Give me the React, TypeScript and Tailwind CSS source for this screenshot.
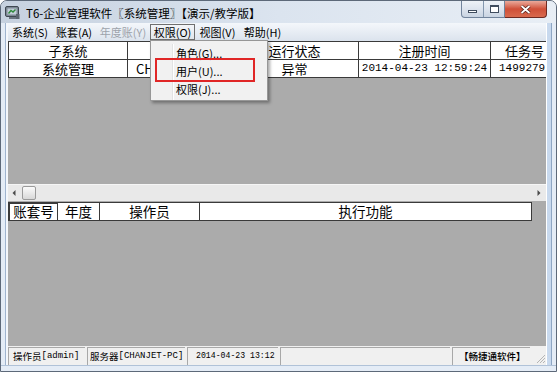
const CJK = "font-['Noto_Sans_CJK_SC',sans-serif]";
const MONO = "font-['Liberation_Mono',monospace]";

function AppIcon() {
  return (
    <svg width="15" height="15" viewBox="0 0 15 15">
      <rect x="0.5" y="1.5" width="13" height="10" rx="1.5" fill="#7d8894" stroke="#3f4852" />
      <rect x="2.5" y="3.5" width="9" height="6" fill="#c3ced9" />
      <path d="M3.5 8.5 L6 5.5 L8 7 L10.5 4.5" stroke="#2f8a3c" strokeWidth="1.4" fill="none" />
      <rect x="4" y="12" width="7" height="2" fill="#6a7480" />
      <rect x="11" y="9" width="3.5" height="5" fill="#5b6570" />
    </svg>
  );
}

function TitleBar() {
  return (
    <div className="h-[22px] flex items-start bg-gradient-to-r from-[#c6d1df] via-[#dbe4ef] to-[#e8eef5]">
      <div className="ml-[4px] mt-[4px]">
        <AppIcon />
      </div>
      <div className={`ml-[6px] mt-[5px] text-[11.5px] leading-[14px] text-black whitespace-nowrap ${CJK}`}>
        T6-企业管理软件〖系统管理〗【演示/教学版】
      </div>
      <div className="flex-1" />
      <div className="flex mr-[9px]">
        <div className="flex h-[17px] border border-t-0 border-[#71839b] rounded-bl-[4px] overflow-hidden bg-gradient-to-b from-[#eef2f7] via-[#dde4ee] to-[#c9d4e2]">
          <div className="w-[22px] flex items-center justify-center border-r border-[#8497ae]">
            <div className="w-[9px] h-[3px] mt-[5px] border border-[#3f4c5e] bg-white" />
          </div>
          <div className="w-[20px] flex items-center justify-center">
            <div className="w-[9px] h-[8px] border border-t-2 border-[#3f4c5e] bg-white" />
          </div>
        </div>
        <div className="w-[42px] h-[17px] flex items-center justify-center border border-t-0 border-l-0 border-[#6e2a22] rounded-br-[4px] bg-gradient-to-b from-[#e9a99b] via-[#cf4f38] to-[#d96a4e]">
          <svg width="11" height="9" viewBox="0 0 11 9">
            <path d="M1.5 1 L9.5 8 M9.5 1 L1.5 8" stroke="#4a1a14" strokeWidth="3.2" />
            <path d="M1.5 1 L9.5 8 M9.5 1 L1.5 8" stroke="#ffffff" strokeWidth="1.8" />
          </svg>
        </div>
      </div>
    </div>
  );
}

const menus = [
  { label: "系统(S)", w: "w-[44px]" },
  { label: "账套(A)", w: "w-[44px]" },
  { label: "年度账(Y)", w: "w-[54px]", disabled: true },
  { label: "权限(O)", w: "w-[45px]", open: true },
  { label: "视图(V)", w: "w-[45px]" },
  { label: "帮助(H)", w: "w-[45px]" },
];

function MenuBar() {
  return (
    <div className={`h-[18px] flex items-center bg-gradient-to-b from-[#f4f7fb] to-[#dbe3ed] text-[11px] ${CJK}`}>
      {menus.map((m) => (
        <div
          key={m.label}
          className={`${m.w} h-[16px] flex items-center justify-center leading-none ${
            m.disabled ? "text-[#9da3ab]" : "text-black"
          } ${m.open ? "border border-[#6f6f6f] bg-gradient-to-b from-[#f3f5f8] to-[#e1e6ec]" : ""}`}
        >
          {m.label}
        </div>
      ))}
    </div>
  );
}

const topCols = [
  { w: "w-[120px]", head: "子系统", data: "系统管理" },
  { w: "w-[103px]", head: "站点", data: "CHANJET-PC", left: true },
  { w: "w-[128px]", head: "运行状态", data: "异常" },
  { w: "w-[132px]", head: "注册时间", data: "2014-04-23 12:59:24", mono: true },
  { w: "w-[68px]", head: "任务号", data: "1499279", mono: true, left: true },
];

function TopTable() {
  return (
    <div className="overflow-hidden">
      <div className={`flex border-t border-[#3a3a3a] text-[13px] leading-none ${CJK}`}>
        {topCols.map((c, i) => (
          <div
            key={c.head}
            className={`${c.w} shrink-0 h-[18px] flex items-center justify-center bg-white border-r border-b border-[#3a3a3a] ${
              i === 0 ? "border-l" : ""
            }`}
          >
            {c.head}
          </div>
        ))}
      </div>
      <div className="flex leading-none">
        {topCols.map((c, i) => (
          <div
            key={c.head}
            className={`${c.w} shrink-0 h-[18px] flex items-center bg-white border-r border-b border-[#3a3a3a] whitespace-nowrap overflow-hidden ${
              i === 0 ? "border-l" : ""
            } ${c.left ? "justify-start pl-[8px]" : "justify-center"} ${
              c.mono ? `${MONO} text-[11px]` : `${CJK} text-[13px]`
            }`}
          >
            {c.data}
          </div>
        ))}
      </div>
    </div>
  );
}

function ScrollBar() {
  return (
    <div className="h-[17px] flex items-center bg-[#e9e9e9] border-t border-[#f5f5f5]">
      <svg className="ml-[4px]" width="4" height="6" viewBox="0 0 4 6">
        <path d="M3.5 0 L0.5 3 L3.5 6Z" fill="#4a4a4a" />
      </svg>
      <div className="ml-[6px] w-[14px] h-[14px] rounded-[2px] border border-[#9a9a9a] bg-gradient-to-b from-[#fbfbfb] to-[#d8d8d8]" />
      <div className="flex-1" />
      <svg className="mr-[5px]" width="4" height="6" viewBox="0 0 4 6">
        <path d="M0.5 0 L3.5 3 L0.5 6Z" fill="#4a4a4a" />
      </svg>
    </div>
  );
}

const logCols = [
  { w: "w-[50px]", head: "账套号" },
  { w: "w-[42px]", head: "年度" },
  { w: "w-[100px]", head: "操作员" },
  { w: "w-[332px]", head: "执行功能" },
];

function LogHeader() {
  return (
    <div className={`mt-[1px] flex text-[13.5px] leading-none ${CJK}`}>
      {logCols.map((c, i) => (
        <div
          key={c.head}
          className={`${c.w} shrink-0 h-[19px] flex items-center justify-center bg-white border-t border-r border-b border-[#3a3a3a] ${
            i === 0 ? "border-l-2 border-t-2" : ""
          }`}
        >
          {c.head}
        </div>
      ))}
    </div>
  );
}

function StatusBar() {
  const cell =
    "h-full flex items-center whitespace-nowrap overflow-hidden border-l border-t border-[#a8a8a8] border-r-white border-b-white";
  return (
    <div className={`h-[19px] flex gap-[2px] bg-[#f0f0f0] pt-[1px] text-[9.5px] leading-none text-black ${CJK}`}>
      <div className={`${cell} w-[77px] pl-[4px]`}>
        操作员<span className={`${MONO} text-[9px]`}>[admin]</span>
      </div>
      <div className={`${cell} w-[98px] pl-[2px]`}>
        服务器<span className={`${MONO} text-[9px]`}>[CHANJET-PC]</span>
      </div>
      <div className={`${cell} w-[91px] pl-[8px] ${MONO} text-[8.2px]`}>2014-04-23 13:12</div>
      <div className={`${cell} flex-1`} />
      <div className={`${cell} w-[78px] pl-[6px] font-medium`}>【畅捷通软件】</div>
      <div className="w-[14px] h-full flex items-end justify-end pb-[1px]">
        <svg width="11" height="11" viewBox="0 0 11 11">
          <path d="M10 2 L2 10 M10 5 L5 10 M10 8 L8 10" stroke="#b5b5b5" strokeWidth="1" />
        </svg>
      </div>
    </div>
  );
}

function Dropdown() {
  const items = ["角色(G)...", "用户(U)...", "权限(J)..."];
  return (
    <div className={`absolute left-[150px] top-[40px] w-[118px] h-[61px] bg-[#f1f1f1] border border-[#979797] shadow-[2px_2px_3px_rgba(0,0,0,0.35)] pt-[3px] flex ${CJK}`}>
      <div className="w-[22px] border-r border-[#e2e3e3]" />
      <div className="flex flex-col border-l border-white">
        {items.map((t) => (
          <div key={t} className="h-[18px] pl-[2px] flex items-center text-[11px] leading-none text-black">
            {t}
          </div>
        ))}
      </div>
    </div>
  );
}

export default function App() {
  return (
    <div className="relative w-[558px] h-[374px] bg-white overflow-hidden">
      <div className="w-[557px] h-[372px] flex flex-col border border-[#5d6979] rounded-t-[7px] bg-[#dce6f2] overflow-hidden">
        <TitleBar />
        <div className="flex-1 flex min-h-0">
          <div className="w-[7px] flex">
            <div className="w-[4px] bg-[#e4ecf6]" />
            <div className="w-[1px] bg-[#9fb4cf]" />
            <div className="w-[2px] bg-[#f4f7fb]" />
          </div>
          <div className="flex-1 min-w-0 flex flex-col bg-[#ababab]">
            <MenuBar />
            <TopTable />
            <div className="h-[106px]" />
            <ScrollBar />
            <LogHeader />
            <div className="flex-1" />
            <StatusBar />
          </div>
          <div className="w-[10px] flex">
            <div className="w-[1px] bg-white" />
            <div className="w-[4px] bg-[#c8d9ee]" />
            <div className="w-[1px] bg-[#8ea6c4]" />
            <div className="w-[4px] bg-[#e4ecf6]" />
          </div>
        </div>
        <div className="h-[6px] bg-[#e4ecf6] border-t border-[#b0c2d8]" />
      </div>
      <Dropdown />
      <div className="absolute left-[155px] top-[58px] w-[100px] h-[24px] border-2 border-[#e02626]" />
    </div>
  );
}
